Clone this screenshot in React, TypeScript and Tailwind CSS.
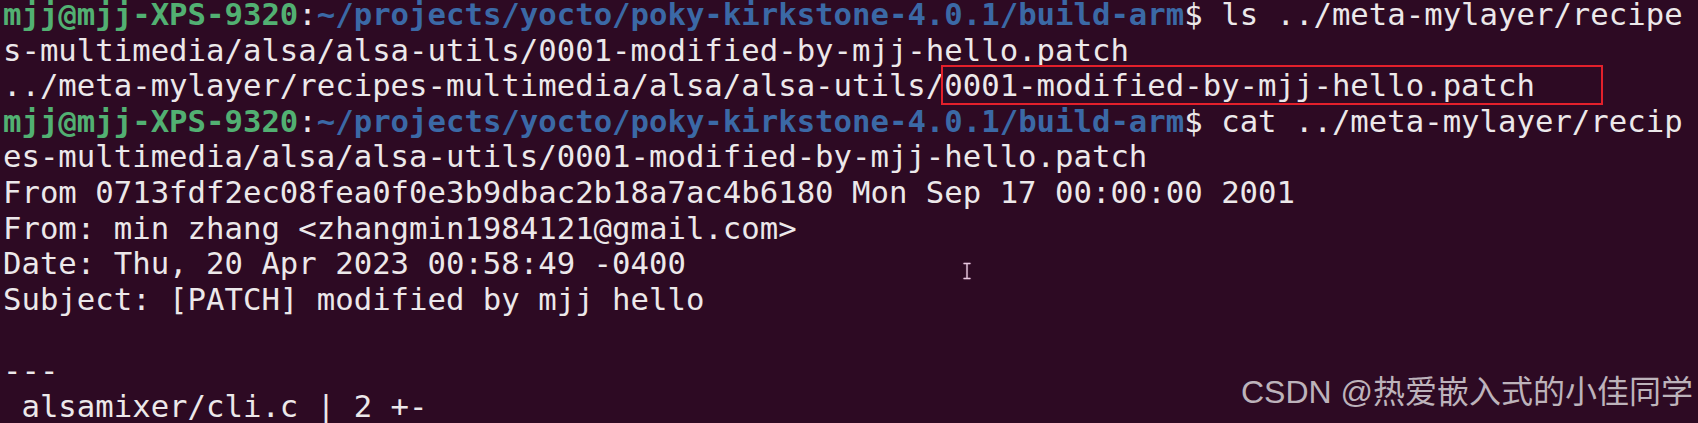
import React from 'react';

const mono = { fontFamily: '"DejaVu Sans Mono", "Liberation Mono", monospace' };

function Prompt() {
  return (
    <>
      <span className="font-bold text-[#52b072]">mjj@mjj-XPS-9320</span>
      <span>:</span>
      <span className="font-bold text-[#3b69a6]">~/projects/yocto/poky-kirkstone-4.0.1/build-arm</span>
      <span>$</span>
    </>
  );
}

export default function App() {
  const lines: React.ReactNode[] = [
    <>
      <Prompt /> ls ../meta-mylayer/recipe
    </>,
    's-multimedia/alsa/alsa-utils/0001-modified-by-mjj-hello.patch',
    <>
      ../meta-mylayer/recipes-multimedia/alsa/alsa-utils/
      <span className="relative">
        0001-modified-by-mjj-hello.patch
        {/* highlight box */}
        <span className="absolute -left-[3px] -right-[68px] -top-[3px] -bottom-[2px] border-2 border-[#e3202b]" />
      </span>
    </>,
    <>
      <Prompt /> cat ../meta-mylayer/recip
    </>,
    'es-multimedia/alsa/alsa-utils/0001-modified-by-mjj-hello.patch',
    'From 0713fdf2ec08fea0f0e3b9dbac2b18a7ac4b6180 Mon Sep 17 00:00:00 2001',
    'From: min zhang <zhangmin1984121@gmail.com>',
    'Date: Thu, 20 Apr 2023 00:58:49 -0400',
    'Subject: [PATCH] modified by mjj hello',
    '',
    '---',
    ' alsamixer/cli.c | 2 +-',
  ];

  return (
    <div className="relative w-[1698px] h-[423px] overflow-hidden bg-[#2d0a23] text-[#ece8ea]">
      <div className="-mt-[3px] pl-[3px] text-[30.66px] leading-[35.6px] whitespace-pre" style={mono}>
        {lines.map((line, i) => (
          <div key={i} className="h-[35.6px]">
            {line}
          </div>
        ))}
      </div>

      {/* mouse I-beam cursor */}
      <svg className="absolute left-[962px] top-[262px]" width="10" height="18" viewBox="0 0 10 18">
        <path d="M2 1.5h6M5 1.5v15M2 16.5h6" stroke="#3a1530" strokeWidth="3.2" strokeLinecap="round" fill="none" />
        <path d="M2 1.5h6M5 1.5v15M2 16.5h6" stroke="#e9c8df" strokeWidth="1.4" strokeLinecap="round" fill="none" />
      </svg>

      {/* watermark */}
      <div
        className="absolute left-[1241px] top-[368px] text-[32px] leading-[48px] text-[#bdb3bb] whitespace-nowrap"
        style={{ fontFamily: '"Liberation Sans", "Noto Sans CJK SC", sans-serif' }}
      >
        CSDN @热爱嵌入式的小佳同学
      </div>
    </div>
  );
}
